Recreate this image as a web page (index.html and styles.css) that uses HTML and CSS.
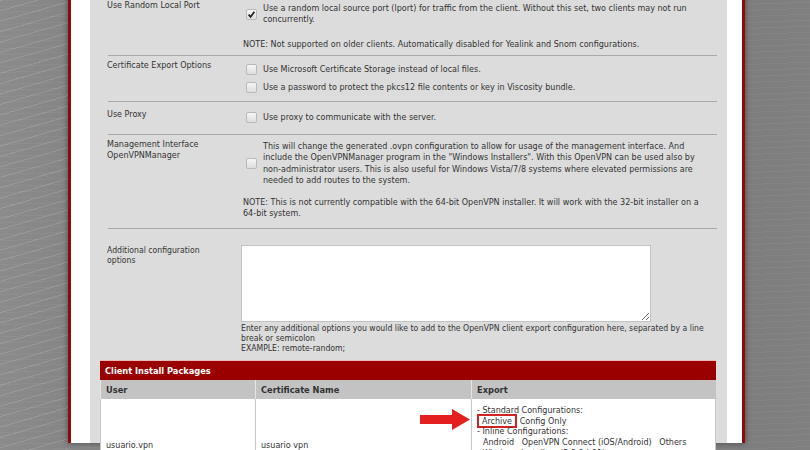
FILE: index.html
```html
<!DOCTYPE html>
<html>
<head>
<meta charset="utf-8">
<link rel="stylesheet" href="styles.css">
</head>
<body>
<div class="page">
  <div class="content">
    <div class="form">
      <div class="row r1">
        <div class="label">Use Random Local Port</div>
        <div class="value">
          <div class="check"><span class="cb"><svg viewBox="0 0 11 11" width="11" height="11"><path d="M2.6 5.6 L4.6 7.8 L8.4 2.8" fill="none" stroke="#222" stroke-width="1.7"/></svg></span><span class="ctext">Use a random local source port (lport) for traffic from the client. Without this set, two clients may not run<br>concurrently.</span></div>
          <p class="note">NOTE: Not supported on older clients. Automatically disabled for Yealink and Snom configurations.</p>
        </div>
      </div>
      <div class="row r2">
        <div class="label">Certificate Export Options</div>
        <div class="value">
          <div class="check"><span class="cb"></span><span class="ctext">Use Microsoft Certificate Storage instead of local files.</span></div>
          <div class="check second"><span class="cb"></span><span class="ctext">Use a password to protect the pkcs12 file contents or key in Viscosity bundle.</span></div>
        </div>
      </div>
      <div class="row r3">
        <div class="label">Use Proxy</div>
        <div class="value">
          <div class="check"><span class="cb"></span><span class="ctext">Use proxy to communicate with the server.</span></div>
        </div>
      </div>
      <div class="row r4">
        <div class="label">Management Interface<br>OpenVPNManager</div>
        <div class="value">
          <div class="check"><span class="cb"></span><span class="ctext">This will change the generated .ovpn configuration to allow for usage of the management interface. And<br>include the OpenVPNManager program in the "Windows Installers". With this OpenVPN can be used also by<br>non-administrator users. This is also useful for Windows Vista/7/8 systems where elevated permissions are<br>needed to add routes to the system.</span></div>
          <p class="note">NOTE: This is not currently compatible with the 64-bit OpenVPN installer. It will work with the 32-bit installer on a<br>64-bit system.</p>
        </div>
      </div>
      <div class="row r5">
        <div class="label">Additional configuration<br>options</div>
        <div class="value">
          <textarea class="ta"></textarea>
          <p class="desc">Enter any additional options you would like to add to the OpenVPN client export configuration here, separated by a line<br>break or semicolon<br>EXAMPLE: remote-random;</p>
        </div>
      </div>
    </div>
    <div class="packages">
      <div class="pk-title">Client Install Packages</div>
      <table class="pk">
        <thead>
          <tr><th class="c1">User</th><th class="c2">Certificate Name</th><th class="c3">Export</th></tr>
        </thead>
        <tbody>
          <tr>
            <td>usuario.vpn</td>
            <td>usuario vpn</td>
            <td class="export">
              <div>- Standard Configurations:</div>
              <div><span class="hl">Archive</span> Config Only</div>
              <div>- Inline Configurations:</div>
              <div class="ind">Android &nbsp; OpenVPN Connect (iOS/Android) &nbsp; Others</div>
              <div>- Windows Installers (2.3.8-I-01):</div>
              <div class="ind">x86-xp &nbsp; x86-win6 &nbsp; x64-xp &nbsp; x64-win6</div>
              <div>- Mac OSX / Viscosity Bundle:</div>
              <div class="ind">Viscosity Bundle &nbsp; Viscosity Inline Config</div>
            </td>
          </tr>
        </tbody>
      </table>
      <svg class="arrow" viewBox="0 0 50 22" width="50" height="22"><polygon points="0,6 32,6 32,0 50,10.5 32,21 32,15 0,15" fill="#e3201f"/></svg>
    </div>
  </div>
</div>
</body>
</html>
```
FILE: styles.css
```css
html, body {
  margin: 0;
  height: 100%;
  overflow: hidden;
}
body {
  background-color: #818181;
  background-image:
    repeating-linear-gradient(164deg, rgba(255,255,255,0.13) 0 1px, rgba(255,255,255,0) 1px 10px),
    repeating-linear-gradient(178deg, rgba(255,255,255,0.04) 0 1px, rgba(255,255,255,0) 1px 6px),
    linear-gradient(90deg, #8b8b8b 0, #868686 60px, #7e7e7e 760px, #808080 810px);
  background-size: 68px 100%, 100% 100%, 100% 100%;
  background-repeat: no-repeat;
  font-family: "DejaVu Sans Condensed", "DejaVu Sans", sans-serif;
  font-stretch: condensed;
  font-size: 8.95px;
  color: #333;
}
.page {
  margin-left: 68px;
  width: 637px;
  height: 100%;
  border-left: 3px solid #8e0b0b;
  border-right: 3px solid #8e0b0b;
  background: #fff;
  padding: 0 15px 0 19px;
  box-shadow: 0 0 6px rgba(0,0,0,0.45);
}
.content {
  background: #dcdcdc;
  height: 100%;
  padding: 0 10px;
  position: relative;
}
.form {
  margin-left: 8px;
  margin-top: -7px;
}
.row {
  display: grid;
  grid-template-columns: 133px 1fr;
  border-bottom: 1px solid #a9a9a9;
  line-height: 11.5px;
}
.label {
  margin-left: -1px;
}
.value {
  white-space: nowrap;
}
.check {
  display: flex;
  align-items: center;
  padding-left: 5px;
}
.cb {
  width: 9px;
  height: 9px;
  flex: none;
  border: 1px solid #b9b9b9;
  border-radius: 2px;
  background: linear-gradient(#f6f6f6, #dedede);
  margin-right: 6px;
  position: relative;
}
.cb svg {
  position: absolute;
  left: -1px;
  top: -1px;
}
.note {
  margin: 0;
  padding-left: 2px;
}
.r1 .label { padding-top: 7px; }
.r1 .value { padding-top: 9.5px; padding-bottom: 4.5px; }
.r1 .note { margin-top: 13px; }
.r2 .label { padding-top: 4px; }
.r2 .value { padding-top: 8px; padding-bottom: 8px; }
.r2 .second { margin-top: 6.5px; }
.r3 .label { padding-top: 7px; }
.r3 .value { padding-top: 10px; padding-bottom: 10px; }
.r4 .label { padding-top: 4px; }
.r4 .value { padding-top: 6px; padding-bottom: 8.5px; }
.r4 .note { margin-top: 10px; }
.r5 {
  border-bottom: none;
  line-height: 10px;
  font-size: 8.6px;
}
.r5 .label { padding-top: 15.5px; }
.r5 .value { padding-top: 16px; padding-bottom: 7px; }
.ta {
  display: block;
  width: 410px;
  height: 77px;
  box-sizing: border-box;
  margin: 0;
  border: 1px solid #c2c2c2;
  background: #fff;
  padding: 2px;
}
.desc {
  margin: 1px 0 0 0;
}
.packages {
  position: relative;
  width: 616px;
  border-top: 1px solid #e9b9b9;
}
.pk-title {
  background: #9a0000;
  color: #fff;
  font-weight: bold;
  height: 19px;
  line-height: 19px;
  padding-left: 5px;
  font-size: 9.2px;
}
.pk {
  width: 616px;
  border-collapse: collapse;
  table-layout: fixed;
}
.pk th {
  background: #c3c3c3;
  color: #333;
  font-weight: bold;
  font-size: 9.2px;
  text-align: left;
  height: 19px;
  padding: 0 0 0 5px;
  border-left: 1px solid #e6e6e6;
}
.pk th.c1 { width: 149px; }
.pk th.c2 { width: 210px; }
.pk td {
  background: #fff;
  border: 1px solid #c8c8c8;
  border-top: none;
  padding: 0 0 0 5px;
  vertical-align: middle;
}
.pk td.export {
  padding: 6px 5px 0 5px;
  line-height: 10.7px;
}
.ind {
  padding-left: 6px;
}
.hl {
  border: 2px solid #d42222;
  padding: 0 3px;
}
.arrow {
  position: absolute;
  left: 320px;
  top: 48px;
}
```
